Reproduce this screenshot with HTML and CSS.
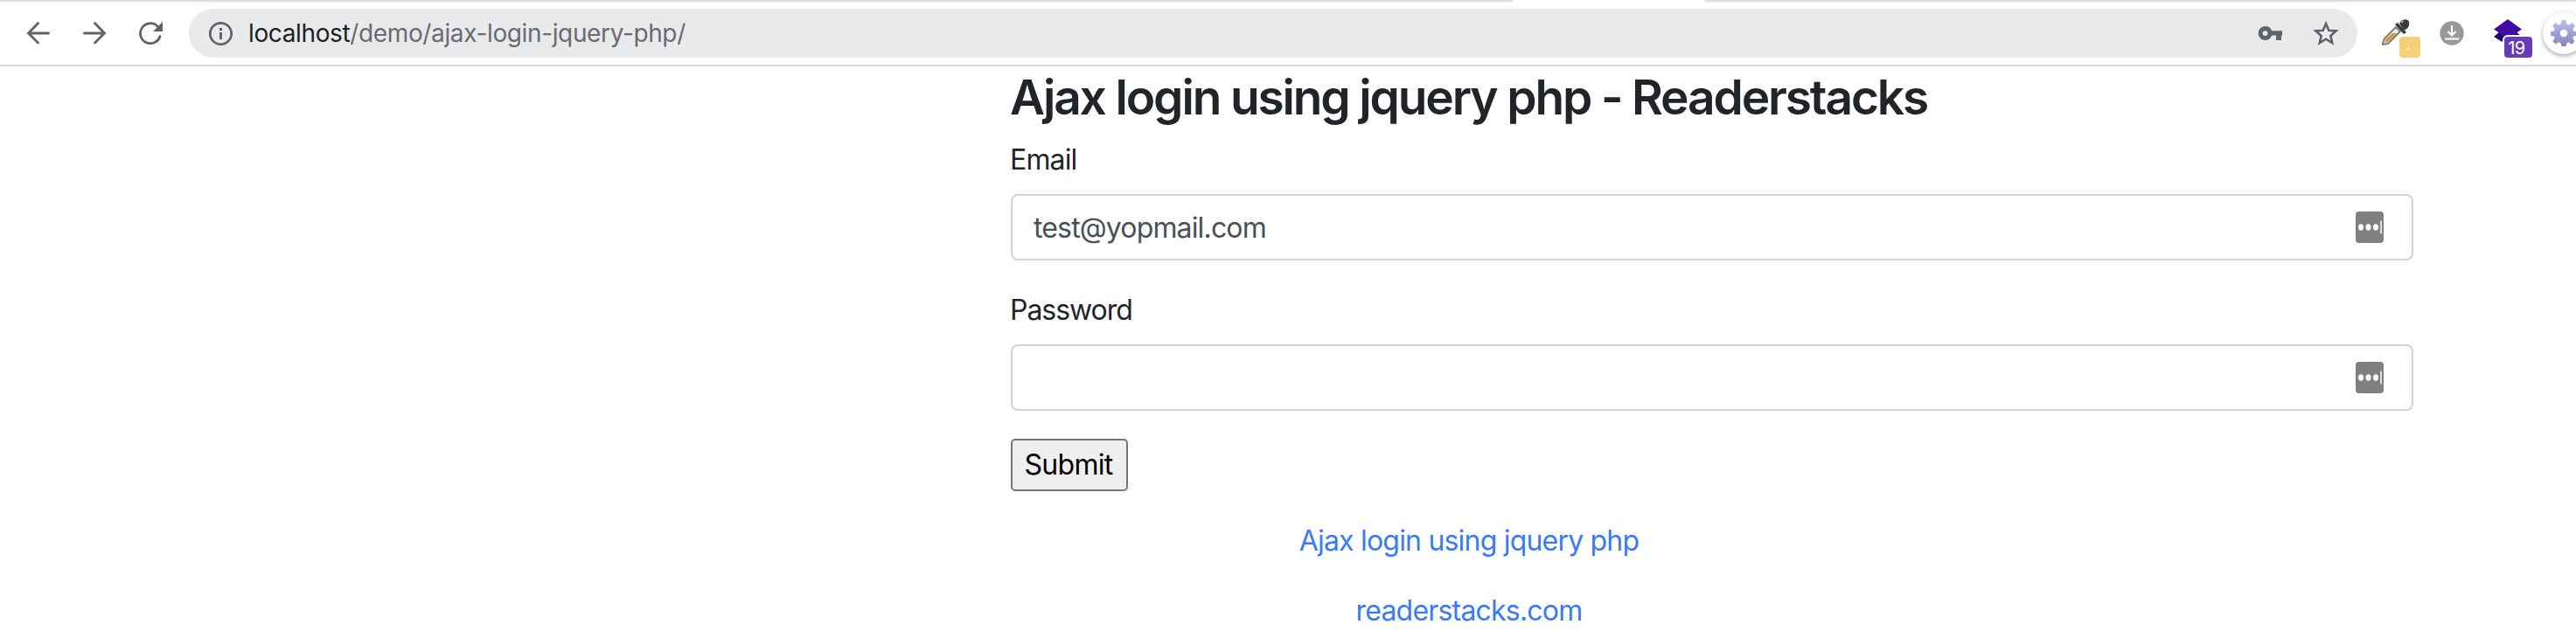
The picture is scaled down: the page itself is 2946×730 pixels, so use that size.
FILE: index.html
```html
<!DOCTYPE html>
<html lang="en">
<head>
<meta charset="utf-8">
<title>Ajax login using jquery php</title>
<link rel="stylesheet" href="styles.css">
</head>
<body>
<header class="toolbar">
  <span class="active-tab"></span>
  <nav class="nav">
    <svg width="28" height="28" viewBox="0 0 28 28"><path d="M25.500 14H3M13.500 2.500L2.500 14l11 11"/></svg>
    <svg width="28" height="28" viewBox="0 0 28 28"><path d="M2.500 14H25M14.500 2.500l11 11.500-11 11"/></svg>
    <svg width="28" height="28" viewBox="0 0 28 28"><path d="M25 17.500A11.500 11.500 0 1 1 22.500 6.500"/><path class="solid" d="M28 1v11H17z"/></svg>
  </nav>
  <div class="address">
    <svg class="info" width="28" height="28" viewBox="0 0 28 28"><circle cx="14.500" cy="14.500" r="12.200"/><path class="solid" d="M13 8h3v3h-3zM13 13h3v8h-3z"/></svg>
    <span class="url"><b>localhost</b>/demo/ajax-login-jquery-php/</span>
    <svg class="key" width="28" height="18" viewBox="0 0 28 18"><path fill-rule="evenodd" d="M8.500 1a8 8 0 1 0 7.700 10.600H21V17h6v-5.400h1V6.200H16.200A8 8 0 0 0 8.500 1zm0 5.200a2.900 2.900 0 1 1 0 5.800 2.900 2.900 0 0 1 0-5.800z"/></svg>
    <svg class="star" width="30" height="30" viewBox="0 0 30 30"><path d="M15 4l3.300 7.700 8.300.7-6.300 5.500 1.900 8.100-7.200-4.300L7.800 26l1.900-8.100-6.300-5.500 8.300-.7z"/></svg>
  </div>
  <div class="extensions">
    <div class="ext picker">
      <svg width="32" height="30" viewBox="0 0 32 30">
        <path d="M16 9L3 22l-2 5v2l6-1L21 14z" fill="#eee" stroke="#777" stroke-width="1.800"/>
        <path d="M12 16h6L7 26l-4 1 1-4z" fill="#cfa038"/>
        <path d="M15 6l3-2 10 11-3 2zM20 5c2-6 10-6 11-2 1 5-2 9-6 9z" fill="#3a3a3a"/>
        <path d="M22 4l3-2" stroke="#999" stroke-width="2"/>
      </svg>
      <span class="badge dot">.</span>
    </div>
    <svg class="download" width="28" height="28" viewBox="0 0 28 28"><circle cx="14" cy="14" r="13.700" fill="#999"/><path d="M14 5v11M9.500 12l4.500 4.500 4.500-4.500M6 20.500h16.500" fill="none" stroke="#fff" stroke-width="2"/></svg>
    <div class="ext stack">
      <svg width="32" height="30" viewBox="0 0 32 30"><path d="M6 15L0 20l16 10 16-10-6-5z" fill="#1c0763"/><path d="M16 0l16 11.500L16 22.500 0 11.500z" fill="#430ca4"/></svg>
      <span class="badge count">19</span>
    </div>
    <div class="gear">
      <svg width="30" height="30" viewBox="-15 -15 30 30">
        <defs><linearGradient id="gear-fill" x1="0" y1="-15" x2="0" y2="15" gradientUnits="userSpaceOnUse"><stop offset="0" stop-color="#bdbcf5"/><stop offset="1" stop-color="#8585b5"/></linearGradient></defs>
        <path fill="url(#gear-fill)" d="M-2.500-15h5l1 4.600 2.300 1 4-2.600 3.200 3.200-2.600 4 1 2.300 3.600.8v4.400l-3.900.8-.9 2.300 2.400 3.500-3.200 3.400-3.800-2.500-2.100 1-1 3.800h-5l-1-3.900-2.200-.9-3.700 2.400-3.300-3.300 2.400-3.600-.9-2.200-4-.8v-4.400l4-.8.900-2.300-2.600-4 3.300-3.200 4 2.600 2.200-1z"/>
        <circle r="4.300" fill="#fff"/>
      </svg>
    </div>
  </div>
</header>
<main class="page">
  <h2 class="title">Ajax login using jquery php - Readerstacks</h2>
  <form class="form">
    <label class="label">Email</label>
    <div class="field"><span class="value">test@yopmail.com</span>
      <svg width="32" height="36" viewBox="0 0 32 36"><rect width="32" height="36" rx="4" fill="#808080"/><g fill="#fff"><ellipse cx="6" cy="18" rx="3" ry="3.700"/><ellipse cx="14.500" cy="18" rx="3" ry="3.700"/><ellipse cx="23" cy="18" rx="3" ry="3.700"/><path d="M28.300 10.500h1.500v15h-1.500z"/></g></svg>
    </div>
    <label class="label password-label">Password</label>
    <div class="field"><span></span>
      <svg width="32" height="36" viewBox="0 0 32 36"><rect width="32" height="36" rx="4" fill="#808080"/><g fill="#fff"><ellipse cx="6" cy="18" rx="3" ry="3.700"/><ellipse cx="14.500" cy="18" rx="3" ry="3.700"/><ellipse cx="23" cy="18" rx="3" ry="3.700"/><path d="M28.300 10.500h1.500v15h-1.500z"/></g></svg>
    </div>
    <button class="submit" type="button">Submit</button>
  </form>
  <div class="links">
    <a>Ajax login using jquery php</a>
    <a>readerstacks.com</a>
  </div>
</main>
</body>
</html>
```

FILE: styles.css
```css
* { box-sizing: border-box; }
body { margin: 0; height: 730px; overflow: hidden; background: #fff; color: #212529; font: 32px/48px Inter, "Liberation Sans", sans-serif; letter-spacing: -0.850px; }
svg { display: block; flex: none; }

.toolbar { position: relative; display: flex; align-items: flex-start; height: 76px; padding-top: 8px; border-top: 2px solid #dfdde4; border-bottom: 2px solid #dadade; }
.active-tab { position: absolute; top: -2px; left: 1730px; width: 220px; height: 2px; background: #fff; }
.nav { display: flex; flex: none; gap: 36px; width: 216px; padding: 14px 0 0 30px; }
.nav svg, .info { fill: none; stroke: #5f6368; stroke-width: 2.800; stroke-linecap: round; }
.nav .solid, .info .solid { fill: #5f6368; stroke: none; }
.address { display: flex; flex: none; align-items: center; width: 2480px; height: 56px; padding: 0 21px 0 22px; border-radius: 28px; background: #e9eaec; }
.url { flex: 1; margin-left: 18px; color: #6a6b6e; font-size: 28px; line-height: 40px; letter-spacing: -0.370px; }
.url b { color: #202124; font-weight: 400; }
.key { margin-right: 35px; fill: #5f6368; }
.star { fill: none; stroke: #5f6368; stroke-width: 2.600; }
.extensions { display: flex; flex: none; width: 250px; height: 64px; overflow: hidden; }
.ext { position: relative; flex: none; width: 46px; height: 56px; padding-top: 12px; }
.picker { margin-left: 28px; }
.badge { position: absolute; bottom: 0; color: #fff; text-align: center; border-radius: 4px; }
.dot { left: 20px; width: 24px; height: 24px; background: #f6d078; font-size: 20px; line-height: 17px; letter-spacing: 0; padding-right: 3px; }
.download { margin: 14px 0 0 20px; }
.stack { margin-left: 34px; }
.count { left: 12px; width: 32px; height: 24px; background: #673ab7; box-shadow: 0 0 0 2px #fff; font-size: 20px; line-height: 27px; letter-spacing: -0.500px; padding-right: 4px; }
.gear { display: grid; place-items: center; flex: none; width: 48px; height: 48px; margin: 4px 0 0 10px; border-radius: 50%; background: #fff; box-shadow: 0 2px 5px rgba(0,0,0,.35); }

.page { margin-left: 1156px; }
.title { margin: 0 0 0 -1px; padding-top: 3px; height: 83px; font-size: 55px; line-height: 64px; font-weight: 560; letter-spacing: -2.130px; white-space: nowrap; }
.form { display: flex; flex-direction: column; align-items: flex-start; width: 1604px; }
.label { height: 63px; margin-left: -1px; }
.password-label { margin-top: 33px; letter-spacing: -1.050px; }
.field { display: flex; align-items: center; justify-content: space-between; width: 1604px; height: 76px; padding: 0 32px 0 24px; border: 2px solid #ced4da; border-radius: 8px; }
.value { color: #495057; padding-top: 1px; }
.submit { width: 134px; height: 60px; margin-top: 32px; padding: 0 2px 0 0; border: 2px solid #767676; border-radius: 5px; background: #efefef; color: #000; font: 32px/48px Inter, "Liberation Sans", sans-serif; letter-spacing: -0.700px; }
.links { display: flex; flex-direction: column; align-items: center; gap: 32px; width: 1048px; padding-top: 33px; color: #3b7af7; letter-spacing: -0.800px; }
```
